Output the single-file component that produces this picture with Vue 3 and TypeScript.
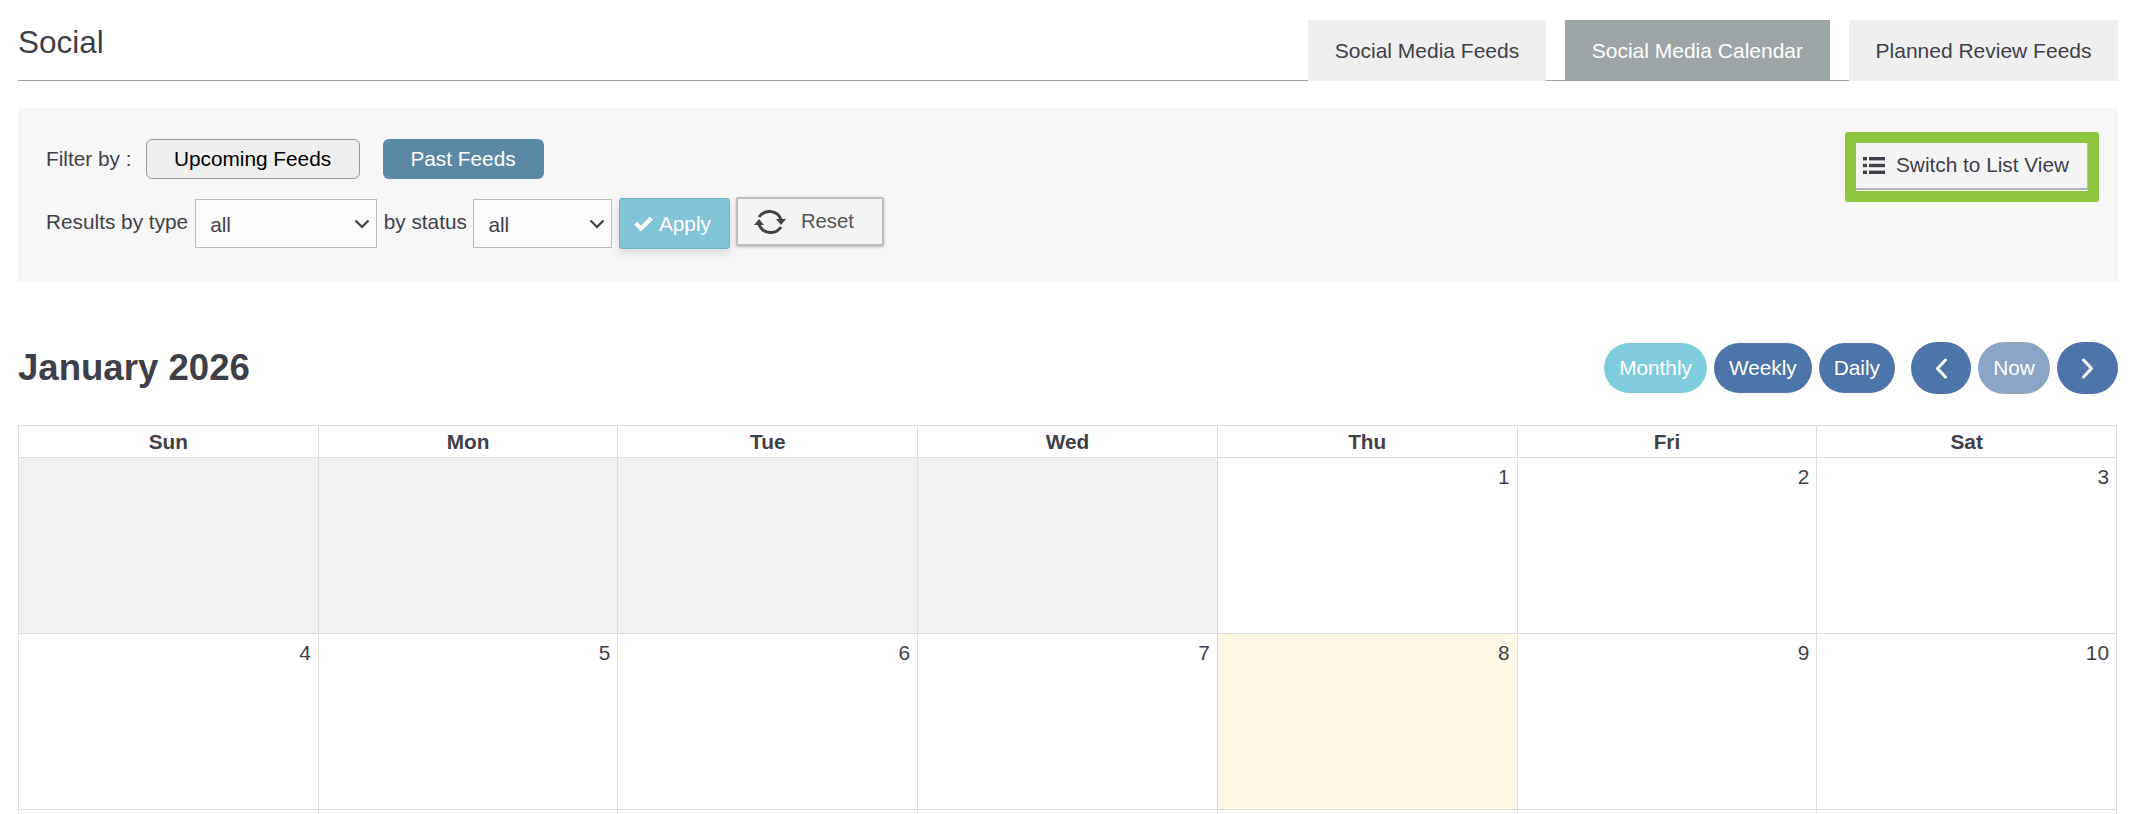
<script setup lang="ts">
import { computed } from 'vue'

interface DayCell {
  key: string
  day: number | null
  blank: boolean
  today: boolean
}

const tabs = [
  { label: 'Social Media Feeds', active: false },
  { label: 'Social Media Calendar', active: true },
  { label: 'Planned Review Feeds', active: false },
]

const weekdays = ['Sun', 'Mon', 'Tue', 'Wed', 'Thu', 'Fri', 'Sat']

const cells = computed<DayCell[]>(() => {
  const list: DayCell[] = []
  for (let i = 0; i < 4; i++) {
    list.push({ key: `blank-${i}`, day: null, blank: true, today: false })
  }
  for (let d = 1; d <= 10; d++) {
    list.push({ key: `day-${d}`, day: d, blank: false, today: d === 8 })
  }
  // next week only peeks in at the bottom of the window
  for (let i = 0; i < 7; i++) {
    list.push({ key: `next-${i}`, day: null, blank: false, today: false })
  }
  return list
})
</script>

<template>
  <div class="page">
    <header class="top">
      <h1 class="title">Social</h1>
      <nav class="tabs">
        <a v-for="tab in tabs" :key="tab.label" class="tab" :class="{ active: tab.active }">{{ tab.label }}</a>
      </nav>
    </header>

    <section class="panel">
      <div class="filters">
        <div class="filter-row">
          <span class="filter-label">Filter by :</span>
          <button class="feed-btn upcoming">Upcoming Feeds</button>
          <button class="feed-btn past">Past Feeds</button>
        </div>
        <div class="result-row">
          <label class="type-label">Results by type</label>
          <span class="select-wrap type-select">
            <select class="select"><option>all</option></select>
            <svg class="chevron" viewBox="0 0 16 10" width="16" height="10">
              <path d="M1.5 1.5 L8 8 L14.5 1.5" fill="none" stroke="#3f3f4a" stroke-width="2.2" />
            </svg>
          </span>
          <label class="status-label">by status</label>
          <span class="select-wrap status-select">
            <select class="select"><option>all</option></select>
            <svg class="chevron" viewBox="0 0 16 10" width="16" height="10">
              <path d="M1.5 1.5 L8 8 L14.5 1.5" fill="none" stroke="#3f3f4a" stroke-width="2.2" />
            </svg>
          </span>
          <button class="apply">
            <svg class="check" viewBox="0 0 21 16" width="21" height="16">
              <path d="M1.5 8.5 L4 6 L8 10 L17 1 L19.5 3.5 L8 15 Z" fill="#fff" stroke="#fff" stroke-linejoin="round" />
            </svg>
            Apply
          </button>
          <button class="reset">
            <svg class="reset-icon" viewBox="0 0 32 30" width="32" height="30">
              <path d="M5 10 A12.5 12.5 0 0 1 27 12.5" fill="none" stroke="#444" stroke-width="3" />
              <path d="M27 20 A12.5 12.5 0 0 1 5 17.5" fill="none" stroke="#444" stroke-width="3" />
              <path d="M22 12 H32 L27 18 Z" fill="#444" />
              <path d="M0 18 H10 L5 12 Z" fill="#444" />
            </svg>
            <span>Reset</span>
          </button>
        </div>
      </div>
      <div class="highlight">
        <button class="list-btn">
          <svg viewBox="0 0 22 17" width="22" height="17">
            <rect x="0" y="0" width="4" height="3.4" fill="#3f3f4a" />
            <rect x="0" y="6.8" width="4" height="3.4" fill="#3f3f4a" />
            <rect x="0" y="13.6" width="4" height="3.4" fill="#3f3f4a" />
            <rect x="6" y="0" width="16" height="3.4" fill="#3f3f4a" />
            <rect x="6" y="6.8" width="16" height="3.4" fill="#3f3f4a" />
            <rect x="6" y="13.6" width="16" height="3.4" fill="#3f3f4a" />
          </svg>
          Switch to List View
        </button>
      </div>
    </section>

    <div class="toolbar">
      <h2 class="month">January 2026</h2>
      <div class="controls">
        <div class="views">
          <button class="pill monthly">Monthly</button>
          <button class="pill">Weekly</button>
          <button class="pill">Daily</button>
        </div>
        <div class="nav">
          <button class="pill arrow" aria-label="Previous">
            <svg viewBox="0 0 13 21" width="13" height="21">
              <path d="M10.5 2 L2.5 10.5 L10.5 19" fill="none" stroke="#fff" stroke-width="3" stroke-linecap="round" stroke-linejoin="round" />
            </svg>
          </button>
          <button class="pill now">Now</button>
          <button class="pill arrow next" aria-label="Next">
            <svg viewBox="0 0 13 21" width="13" height="21">
              <path d="M2.5 2 L10.5 10.5 L2.5 19" fill="none" stroke="#fff" stroke-width="3" stroke-linecap="round" stroke-linejoin="round" />
            </svg>
          </button>
        </div>
      </div>
    </div>

    <div class="calendar">
      <div v-for="name in weekdays" :key="name" class="weekday">{{ name }}</div>
      <div
        v-for="cell in cells"
        :key="cell.key"
        class="cell"
        :class="{ blank: cell.blank, today: cell.today }"
      >
        {{ cell.day }}
      </div>
    </div>
  </div>
</template>

<style scoped>
.page {
  padding: 0 13px 0 18px;
  font-family: "Liberation Sans", Arial, sans-serif;
  font-size: 20.8px;
  color: #3f3f4a;
}

.top {
  display: flex;
  justify-content: space-between;
  padding-top: 20px;
  border-bottom: 1px solid #9ea5a7;
  height: 60px;
  box-sizing: content-box;
}

.title {
  margin: 0;
  font-size: 31.5px;
  font-weight: 400;
  line-height: 44px;
}

.tabs {
  display: flex;
  gap: 19.5px;
  height: 61px;
}

.tab {
  display: flex;
  align-items: center;
  padding: 0 26.5px;
  background: #efefef;
  font-size: 21px;
}

.tab.active {
  background: #9ea5a7;
  color: #fff;
}

.panel {
  display: flex;
  justify-content: space-between;
  align-items: flex-start;
  height: 174px;
  margin-top: 27px;
  background: #f7f7f7;
}

.filters {
  padding: 31px 0 0 28px;
}

.filter-row {
  display: flex;
  align-items: center;
  height: 40px;
}

.filter-label {
  margin-right: 14px;
}

.feed-btn {
  height: 40px;
  border-radius: 6px;
  font: inherit;
  cursor: pointer;
}

.upcoming {
  width: 214px;
  margin-right: 23px;
  background: #efefef;
  border: 1px solid #999;
  color: #000;
}

.past {
  width: 161px;
  background: #5b88a5;
  border: 0;
  color: #fff;
}

.result-row {
  display: flex;
  align-items: center;
  margin-top: 19px;
}

.type-label,
.status-label {
  padding-bottom: 3px;
}

.type-label {
  margin-right: 7px;
}

.status-label {
  margin: 0 6.5px;
}

.select-wrap {
  position: relative;
  display: block;
  height: 49px;
}

.chevron {
  position: absolute;
  top: 20px;
  right: 7px;
  pointer-events: none;
}

.select {
  display: block;
  width: 100%;
  height: 49px;
  padding: 2px 0 0 14px;
  appearance: none;
  background: #fafafa;
  border: 1px solid #bbb;
  border-radius: 0;
  font: inherit;
  color: #3f3f4a;
}

.type-select {
  width: 182px;
}

.status-select {
  width: 139px;
}

.apply {
  display: flex;
  align-items: center;
  gap: 5px;
  width: 111px;
  height: 51px;
  margin-left: 6.5px;
  padding: 0 0 0 13px;
  background: #82c4d8;
  border: 1px solid #6fb3c9;
  border-radius: 3px;
  box-shadow: 0 4px 10px rgba(0, 0, 0, 0.12);
  color: #fff;
  font: inherit;
}

.reset {
  display: flex;
  align-items: center;
  gap: 15px;
  align-self: flex-start;
  width: 148px;
  height: 49px;
  margin: -1px 0 0 6px;
  padding: 0 0 0 16px;
  background: #f4f4f4;
  border: 2px solid #bdbdbd;
  border-radius: 2px;
  box-shadow: 0 1px 3px rgba(0, 0, 0, 0.25);
  color: #555;
  font: inherit;
  font-size: 20.3px;
}

.highlight {
  margin: 24px 19px 0 0;
  padding: 11px;
  background: #8dc63f;
  border-radius: 3px;
}

.list-btn {
  display: flex;
  align-items: center;
  gap: 11px;
  width: 232px;
  height: 48px;
  padding: 0 0 3px 7px;
  background: #f4f4f4;
  border: 0;
  border-bottom: 1px solid #fff;
  box-shadow: inset -1px 0 0 #bbb, inset 0 -2px 0 #b5b5b5;
  color: #3f3f4a;
  font: inherit;
}

.toolbar {
  display: flex;
  justify-content: space-between;
  align-items: center;
  height: 52px;
  margin-top: 60px;
}

.month {
  margin: 0;
  font-size: 36.6px;
  font-weight: 700;
}

.controls,
.views,
.nav {
  display: flex;
  align-items: center;
  gap: 7px;
}

.controls {
  gap: 16px;
}

.pill {
  height: 50px;
  padding: 0 15px;
  background: #4e75a9;
  border: 0;
  border-radius: 25px;
  color: #fff;
  font: inherit;
}

.pill.monthly {
  background: #7fccdf;
}

.pill.arrow,
.pill.now {
  height: 52px;
  border-radius: 26px;
}

.pill.arrow {
  display: flex;
  align-items: center;
  justify-content: center;
  width: 60px;
  padding: 0;
}

.pill.arrow.next {
  width: 61px;
}

.pill.now {
  width: 72px;
  padding: 0;
  background: #8ba5c6;
}

.calendar {
  display: grid;
  grid-template-columns: repeat(7, 1fr);
  margin: 31px 1px 0 0;
  border-top: 1px solid #ddd;
  border-left: 1px solid #ddd;
}

.weekday {
  height: 31px;
  line-height: 31px;
  text-align: center;
  font-weight: 700;
  border-right: 1px solid #ddd;
  border-bottom: 1px solid #ddd;
}

.cell {
  height: 170px;
  padding: 5px 7px 0 0;
  text-align: right;
  line-height: 27px;
  border-right: 1px solid #ddd;
  border-bottom: 1px solid #ddd;
}

.cell.blank {
  background: #f0f0f0;
}

.cell.today {
  background: #fff9e6;
}
</style>

<style>
html,
body {
  overflow: hidden;
}
</style>
